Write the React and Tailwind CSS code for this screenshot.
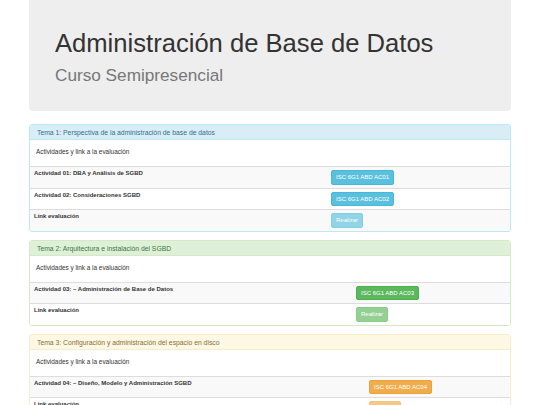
import React from "react";

const themes = {
  info: {
    panel: "border-[#bce8f1]",
    heading: "bg-[#d9edf7] text-[#31708f] border-[#bce8f1]",
    btn: "bg-[#5bc0de] border-[#46b8da]",
  },
  success: {
    panel: "border-[#d6e9c6]",
    heading: "bg-[#dff0d8] text-[#3c763d] border-[#d6e9c6]",
    btn: "bg-[#5cb85c] border-[#4cae4c]",
  },
  warning: {
    panel: "border-[#faebcc]",
    heading: "bg-[#fcf8e3] text-[#8a6d3b] border-[#faebcc]",
    btn: "bg-[#f0ad4e] border-[#eea236]",
  },
};

const temas = [
  {
    titulo: "Tema 1: Perspectiva de la administración de base de datos",
    tipo: "info",
    col: "w-[298px]",
    actividades: [
      { nombre: "Actividad 01: DBA y Análisis de SGBD", codigo: "ISC 6G1 ABD AC01" },
      { nombre: "Actividad 02: Consideraciones SGBD", codigo: "ISC 6G1 ABD AC02" },
    ],
  },
  {
    titulo: "Tema 2: Arquitectura e instalación del SGBD",
    tipo: "success",
    col: "w-[323px]",
    actividades: [
      { nombre: "Actividad 03: – Administración de Base de Datos", codigo: "ISC 6G1 ABD AC03" },
    ],
  },
  {
    titulo: "Tema 3: Configuración y administración del espacio en disco",
    tipo: "warning",
    col: "w-[336px]",
    actividades: [
      { nombre: "Actividad 04: – Diseño, Modelo y Administración SGBD", codigo: "ISC 6G1 ABD AC04" },
    ],
  },
];

const Boton = ({ tema, children, disabled }) => (
  <span
    className={`flex items-center h-[14.5px] px-[4px] rounded-[2px] border text-[6px] leading-none text-white ${
      themes[tema].btn
    } ${disabled ? "opacity-65" : ""}`}
  >
    {children}
  </span>
);

const Fila = ({ label, col, striped, children }) => (
  <div
    className={`flex h-[21.5px] border-t border-[#ddd] ${striped ? "bg-[#f9f9f9]" : "bg-white"}`}
  >
    <div className={`${col} shrink-0 pl-[4px] pt-[3px] text-[6px] leading-[7px] font-bold text-[#333]`}>
      {label}
    </div>
    <div className="flex items-start pl-[3px] pt-[3px]">{children}</div>
  </div>
);

const Panel = ({ tema }) => {
  const t = themes[tema.tipo];
  return (
    <div className={`mb-[8px] border rounded-[3px] overflow-hidden bg-white ${t.panel}`}>
      <div className={`h-[15px] pl-[7px] border-b text-[6.8px] leading-[15px] ${t.heading}`}>
        {tema.titulo}
      </div>
      <div className="h-[26px] pl-[6px] pt-[8px] text-[6.4px] leading-[8px] text-[#333]">
        Actividades y link a la evaluación
      </div>
      {tema.actividades.map((a, i) => (
        <Fila key={a.codigo} label={a.nombre} col={tema.col} striped={i % 2 === 0}>
          <Boton tema={tema.tipo}>{a.codigo}</Boton>
        </Fila>
      ))}
      <Fila label="Link evaluación" col={tema.col} striped={tema.actividades.length % 2 === 0}>
        <Boton tema={tema.tipo} disabled>
          Realizar
        </Boton>
      </Fila>
    </div>
  );
};

export default function App() {
  return (
    <div className="w-[540px] min-h-[405px] bg-white font-['Liberation_Sans',Arial,sans-serif]">
      <div className="mx-[29px]">
        <div className="h-[111px] bg-[#eee] rounded-b-[4px] px-[26px] pt-[31px]">
          <h1 className="text-[25.6px] leading-none text-[#333]">
            Administración de Base de Datos
          </h1>
          <p className="mt-[10px] text-[17.2px] leading-none text-[#777]">Curso Semipresencial</p>
        </div>
        <div className="mt-[13px]">
          {temas.map((t) => (
            <Panel key={t.titulo} tema={t} />
          ))}
        </div>
      </div>
    </div>
  );
}
